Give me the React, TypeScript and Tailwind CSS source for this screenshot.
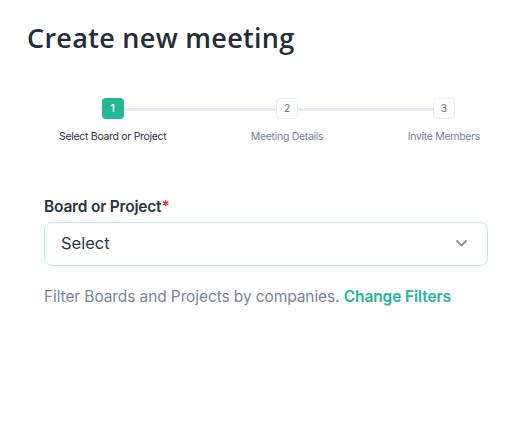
import React from 'react';

const steps = [
  { n: 1, label: 'Select Board or Project', active: true },
  { n: 2, label: 'Meeting Details', active: false },
  { n: 3, label: 'Invite Members', active: false },
];

export default function App() {
  return (
    <div
      className="w-[532px] h-[437px] bg-white"
      style={{ fontFamily: 'Inter, "Noto Sans", sans-serif' }}
    >
      <h1
        className="pl-[27px] pt-[19px] text-[27px] font-semibold leading-[38px] text-[#252c35] tracking-[0.3px]"
        style={{ fontFamily: '"Open Sans", Inter, sans-serif' }}
      >
        Create new meeting
      </h1>

      {/* stepper */}
      <div className="relative mt-[41px] ml-[59px] w-[421px] flex justify-between">
        <div className="absolute left-[54px] right-[36px] top-[10px] h-[3px] bg-[#e8eaef]" />
        {steps.map((s) => (
          <div key={s.n} className="relative flex flex-col items-center">
            <div
              className={
                s.active
                  ? 'w-[22px] h-[21px] rounded-[4px] bg-[#22b893] text-white text-[10px] font-semibold flex items-center justify-center'
                  : 'w-[22px] h-[21px] rounded-[4px] bg-white border border-[#eceef2] text-[#6b7280] text-[10px] flex items-center justify-center'
              }
            >
              {s.n}
            </div>
            <div
              className={
                s.active
                  ? 'mt-[10px] text-[10.5px] text-[#2f3640] tracking-[-0.3px]'
                  : 'mt-[10px] text-[10.5px] text-[#7a8291] tracking-[-0.3px]'
              }
            >
              {s.label}
            </div>
          </div>
        ))}
      </div>

      {/* form */}
      <div className="mx-[44px] mt-[52px]">
        <label className="block text-[15.5px] font-semibold text-[#2b323c] leading-[20px] tracking-[-0.2px]">
          Board or Project<span className="text-[#e0342f]">*</span>
        </label>
        <div className="mt-[5px] h-[44px] rounded-[8px] border border-[#bfe9e3] flex items-center justify-between pl-[16px] pr-[20px]">
          <span className="text-[16.5px] text-[#2f3640]">Select</span>
          <svg width="11" height="7" viewBox="0 0 11 7" fill="none">
            <path d="M1 1l4.5 4.5L10 1" stroke="#8a909c" strokeWidth="1.8" strokeLinecap="round" strokeLinejoin="round" />
          </svg>
        </div>
        <p className="mt-[19px] text-[15.5px] text-[#7d8696] tracking-[-0.1px]">
          Filter Boards and Projects by companies.{' '}
          <span className="font-semibold text-[#22b893]">Change Filters</span>
        </p>
      </div>
    </div>
  );
}
